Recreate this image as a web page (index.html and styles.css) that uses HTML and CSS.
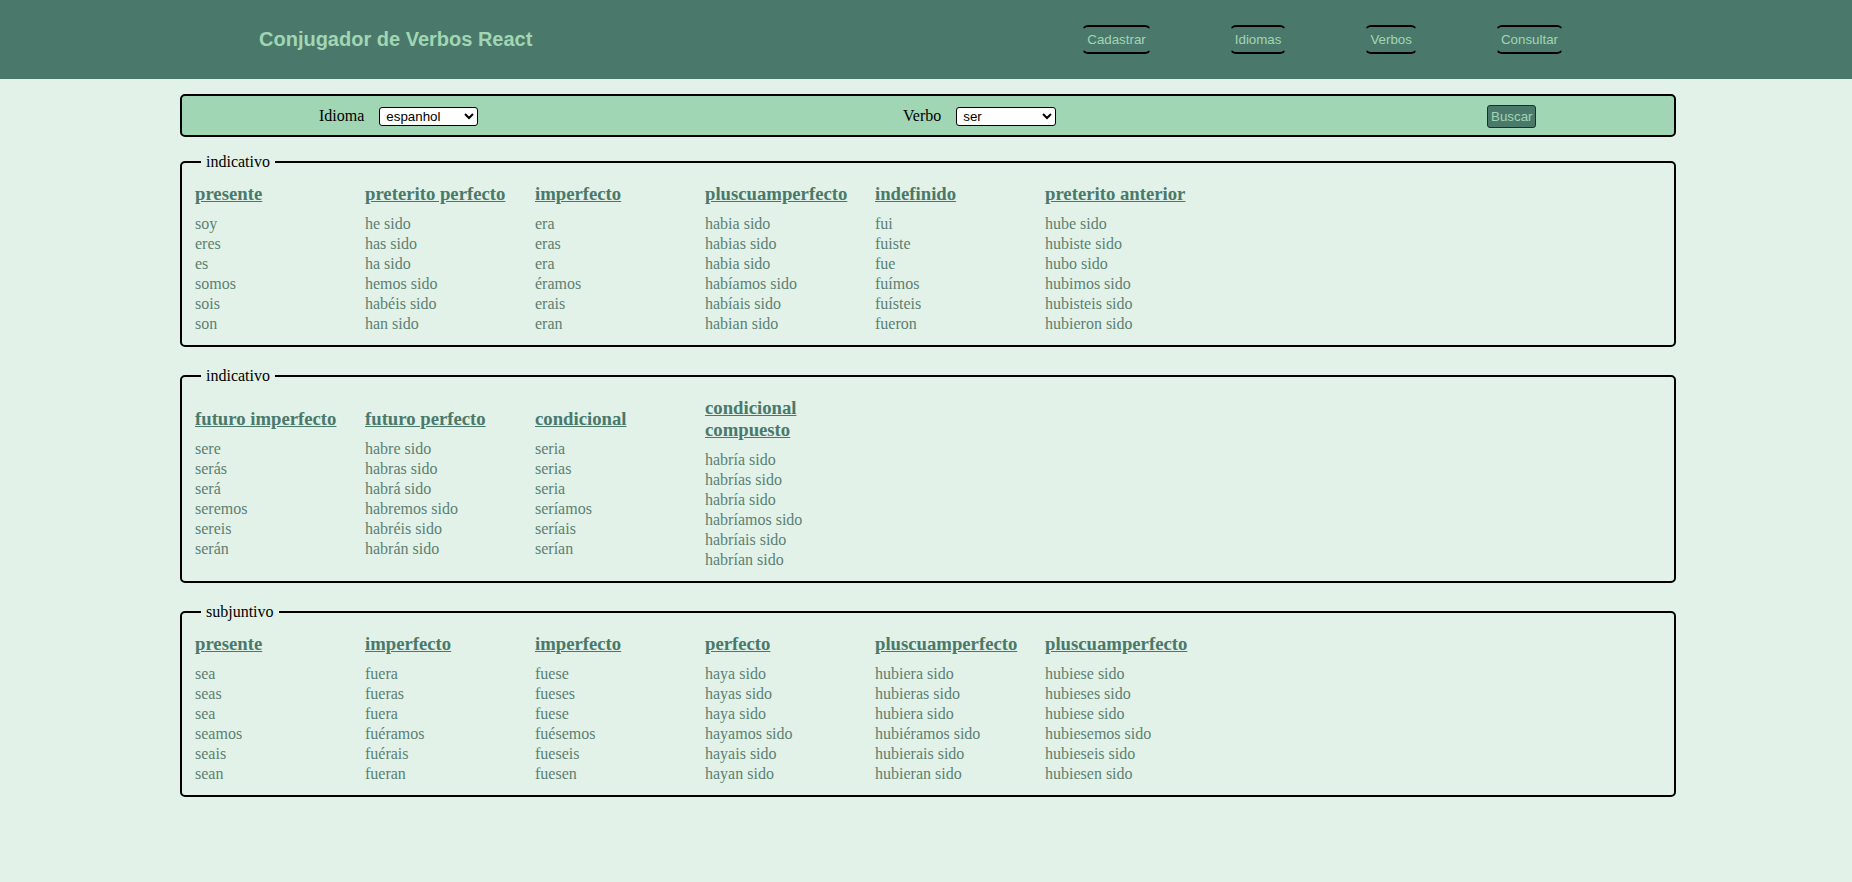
FILE: index.html
```html
<!DOCTYPE html>
<html lang="pt">
<head>
<meta charset="utf-8">
<title>Conjugador de Verbos React</title>
<link rel="stylesheet" href="styles.css">
</head>
<body>
<header class="topbar">
  <div class="brand">Conjugador de Verbos React</div>
  <nav class="nav">
    <button class="nav-btn">Cadastrar</button>
    <button class="nav-btn">Idiomas</button>
    <button class="nav-btn">Verbos</button>
    <button class="nav-btn">Consultar</button>
  </nav>
</header>

<main class="main">
  <form class="search">
    <div class="field">
      <label class="field-label">Idioma</label>
      <select class="sel sel-idioma"><option>espanhol</option><option>portugues</option></select>
    </div>
    <div class="field">
      <label class="field-label">Verbo</label>
      <select class="sel sel-verbo"><option>ser</option><option>estar</option></select>
    </div>
    <div class="field">
      <button type="button" class="search-btn">Buscar</button>
    </div>
  </form>

  <fieldset class="mode mode-first">
    <legend class="mode-title">indicativo</legend>
    <div class="tenses">
      <div class="tense"><h3 class="tense-name">presente</h3>
        <div class="forms"><div>soy</div><div>eres</div><div>es</div><div>somos</div><div>sois</div><div>son</div></div></div>
      <div class="tense"><h3 class="tense-name">preterito perfecto</h3>
        <div class="forms"><div>he sido</div><div>has sido</div><div>ha sido</div><div>hemos sido</div><div>habéis sido</div><div>han sido</div></div></div>
      <div class="tense"><h3 class="tense-name">imperfecto</h3>
        <div class="forms"><div>era</div><div>eras</div><div>era</div><div>éramos</div><div>erais</div><div>eran</div></div></div>
      <div class="tense"><h3 class="tense-name">pluscuamperfecto</h3>
        <div class="forms"><div>habia sido</div><div>habias sido</div><div>habia sido</div><div>habíamos sido</div><div>habíais sido</div><div>habian sido</div></div></div>
      <div class="tense"><h3 class="tense-name">indefinido</h3>
        <div class="forms"><div>fui</div><div>fuiste</div><div>fue</div><div>fuímos</div><div>fuísteis</div><div>fueron</div></div></div>
      <div class="tense"><h3 class="tense-name">preterito anterior</h3>
        <div class="forms"><div>hube sido</div><div>hubiste sido</div><div>hubo sido</div><div>hubimos sido</div><div>hubisteis sido</div><div>hubieron sido</div></div></div>
    </div>
  </fieldset>

  <fieldset class="mode">
    <legend class="mode-title">indicativo</legend>
    <div class="tenses">
      <div class="tense"><h3 class="tense-name">futuro imperfecto</h3>
        <div class="forms"><div>sere</div><div>serás</div><div>será</div><div>seremos</div><div>sereis</div><div>serán</div></div></div>
      <div class="tense"><h3 class="tense-name">futuro perfecto</h3>
        <div class="forms"><div>habre sido</div><div>habras sido</div><div>habrá sido</div><div>habremos sido</div><div>habréis sido</div><div>habrán sido</div></div></div>
      <div class="tense"><h3 class="tense-name">condicional</h3>
        <div class="forms"><div>seria</div><div>serias</div><div>seria</div><div>seríamos</div><div>seríais</div><div>serían</div></div></div>
      <div class="tense"><h3 class="tense-name">condicional compuesto</h3>
        <div class="forms"><div>habría sido</div><div>habrías sido</div><div>habría sido</div><div>habríamos sido</div><div>habríais sido</div><div>habrían sido</div></div></div>
    </div>
  </fieldset>

  <fieldset class="mode">
    <legend class="mode-title">subjuntivo</legend>
    <div class="tenses">
      <div class="tense"><h3 class="tense-name">presente</h3>
        <div class="forms"><div>sea</div><div>seas</div><div>sea</div><div>seamos</div><div>seais</div><div>sean</div></div></div>
      <div class="tense"><h3 class="tense-name">imperfecto</h3>
        <div class="forms"><div>fuera</div><div>fueras</div><div>fuera</div><div>fuéramos</div><div>fuérais</div><div>fueran</div></div></div>
      <div class="tense"><h3 class="tense-name">imperfecto</h3>
        <div class="forms"><div>fuese</div><div>fueses</div><div>fuese</div><div>fuésemos</div><div>fueseis</div><div>fuesen</div></div></div>
      <div class="tense"><h3 class="tense-name">perfecto</h3>
        <div class="forms"><div>haya sido</div><div>hayas sido</div><div>haya sido</div><div>hayamos sido</div><div>hayais sido</div><div>hayan sido</div></div></div>
      <div class="tense"><h3 class="tense-name">pluscuamperfecto</h3>
        <div class="forms"><div>hubiera sido</div><div>hubieras sido</div><div>hubiera sido</div><div>hubiéramos sido</div><div>hubierais sido</div><div>hubieran sido</div></div></div>
      <div class="tense"><h3 class="tense-name">pluscuamperfecto</h3>
        <div class="forms"><div>hubiese sido</div><div>hubieses sido</div><div>hubiese sido</div><div>hubiesemos sido</div><div>hubieseis sido</div><div>hubiesen sido</div></div></div>
    </div>
  </fieldset>
</main>
</body>
</html>
```

FILE: styles.css
```css
html, body {
  margin: 0;
  padding: 0;
}

body {
  background: #e2f2e8;
  font-family: "Liberation Serif", "Times New Roman", serif;
  font-size: 16px;
  color: #000;
}

.topbar {
  height: 79px;
  background: #4a796b;
  display: flex;
  align-items: center;
  justify-content: space-between;
  padding: 0 289px 0 259px;
  box-sizing: border-box;
}

.brand {
  font-family: "Liberation Sans", Arial, sans-serif;
  font-weight: bold;
  font-size: 20px;
  color: #a1d6b4;
}

.nav {
  display: flex;
  gap: 79px;
  align-items: center;
}

.nav-btn {
  font-family: "Liberation Sans", Arial, sans-serif;
  font-size: 13.333px;
  line-height: 15px;
  color: #a1d6b4;
  background: #4a796b;
  border-top: 2px solid #000;
  border-bottom: 2px solid #000;
  border-left: 1px solid transparent;
  border-right: 1px solid transparent;
  border-radius: 6px;
  padding: 5px 4px;
  margin: 0;
  cursor: pointer;
}

.main {
  padding: 15px 0 0 180px;
}

.search {
  width: 1496px;
  height: 43px;
  box-sizing: border-box;
  background: #a1d6b4;
  border: 2px solid #000;
  border-radius: 5px;
  display: grid;
  grid-template-columns: 584px 584px 1fr;
  align-items: center;
  padding-left: 137px;
  margin: 0;
}

.field {
  display: flex;
  align-items: center;
  gap: 15px;
}

.field-label {
  font-size: 16px;
}

.sel {
  font-family: "Liberation Sans", Arial, sans-serif;
  font-size: 13.333px;
  height: 19px;
  border: 1px solid #000;
  border-radius: 3px;
  background: #fff;
  color: #000;
  padding: 0 2px;
  margin: 2px 0 0;
  box-sizing: border-box;
}

.sel-idioma { width: 99px; }
.sel-verbo { width: 100px; }

.search-btn {
  font-family: "Liberation Sans", Arial, sans-serif;
  font-size: 13.333px;
  line-height: 15px;
  color: #a1d6b4;
  background: #4a796b;
  border: 1px solid #1e2e28;
  border-radius: 3px;
  padding: 3px 3px;
  margin: 2px 0 0;
}

.mode {
  width: 1496px;
  box-sizing: border-box;
  border: 2px solid #000;
  border-radius: 5px;
  margin: 20px 0 0 0;
  padding: 0 13px 11px;
}

.mode-first {
  margin-top: 16px;
}

.mode-title {
  margin-left: 6px;
  padding: 0 5px;
  font-size: 16px;
}

.tenses {
  display: flex;
  align-items: center;
  gap: 20px;
}

.tense {
  width: 150px;
}

.tense-name {
  margin: 12px 0 9px;
  font-size: 18.72px;
  font-weight: bold;
  color: #4a796b;
  text-decoration: underline;
}

.forms {
  color: #5c7f72;
  font-size: 16px;
  line-height: 20px;
}
```
